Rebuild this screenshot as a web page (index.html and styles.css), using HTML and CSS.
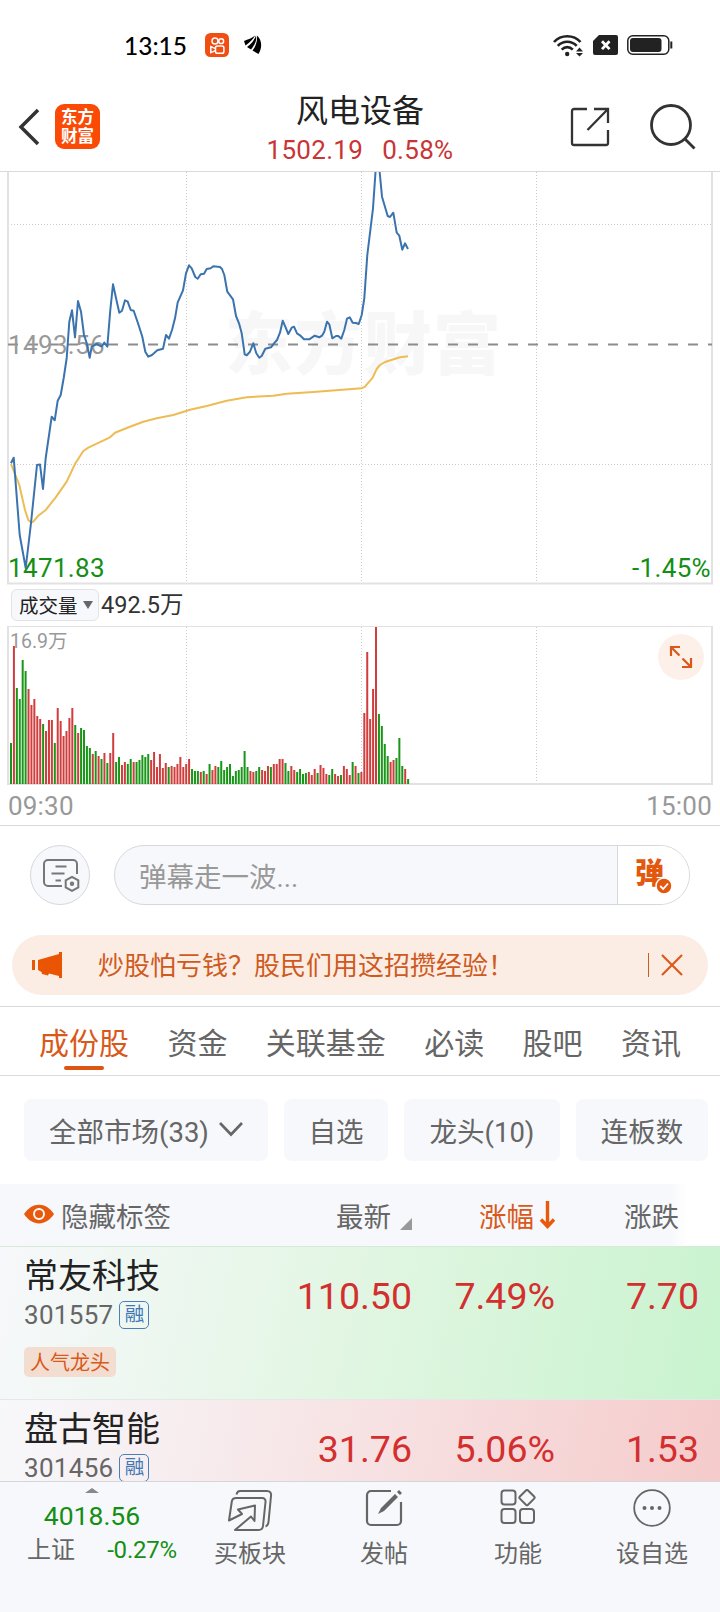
FILE: index.html
```html
<!DOCTYPE html>
<html lang="zh-CN">
<head>
    <meta charset="UTF-8">
    <meta name="viewport" content="width=device-width, initial-scale=1.0">
    <title>风电设备</title>
    <link rel="stylesheet" href="styles.css">
</head>
<body>

    <div class="status-bar">
        <div class="status-left">
            <span class="clock">13:15</span>
            <svg class="app-dot" width="24" height="24" viewBox="0 0 24 24" fill="none">
                <rect width="24" height="24" rx="5.5" fill="#f04e12"/>
                <g stroke="#fff" stroke-width="1.5">
                    <circle cx="10" cy="8" r="3"/>
                    <circle cx="16.2" cy="8.2" r="2.4"/>
                    <rect x="10.5" y="13" width="8.4" height="7.2" rx="1.8"/>
                    <path d="M10.5 15.6 5.8 13.6v6l4.7-2"/>
                </g>
            </svg>
            <svg width="18" height="20" viewBox="0 0 18 20">
                <path d="M0 6C4 4 8 3.500 11 .5 9.500 4 6 7 1.500 10.500zM3 12C7 9.500 10.500 5 12 .5 13 6 10.500 10 7 14.500zM8.500 15.500C12 11 13.500 6 13 .5 18 5 18.500 12 14.500 19z" fill="#000"/>
            </svg>
        </div>
        <div class="status-right">
            <svg width="31" height="23" viewBox="0 0 31 23" fill="none">
                <g stroke="#222" stroke-width="2.6">
                    <path d="M1 8C8 .3 20.5.3 27.5 8"/>
                    <path d="M4.8 11.8C10 6.300 18.500 6.300 23.700 11.800"/>
                    <path d="M8.700 15.700C12 12.300 16.500 12.300 19.800 15.700"/>
                </g>
                <circle cx="14.200" cy="20" r="2.200" fill="#222"/>
                <path d="M23 17.500 26.500 13.500 30 17.500zM23 19 26.500 22.500 30 19z" fill="#222"/>
            </svg>
            <svg width="25" height="20" viewBox="0 0 25 20">
                <path d="M6 0h17a2 2 0 0 1 2 2v16a2 2 0 0 1-2 2H2a2 2 0 0 1-2-2V6z" fill="#222"/>
                <path d="M9 6.300l7.500 7.800M16.500 6.300 9 14.100" stroke="#fff" stroke-width="2.800"/>
            </svg>
            <svg width="46" height="20" viewBox="0 0 46 20" fill="none">
                <rect x=".8" y=".8" width="41" height="18.400" rx="5" stroke="#222" stroke-width="1.500"/>
                <rect x="3" y="3" width="31.500" height="14" rx="3" fill="#222"/>
                <path d="M44.300 6.500v7" stroke="#222" stroke-width="2"/>
            </svg>
        </div>
    </div>

    <header class="header">
        <div class="header-left">
            <svg width="22" height="38" viewBox="0 0 22 38" fill="none">
                <path d="M20 2 3 19l17 17" stroke="#333" stroke-width="3.500"/>
            </svg>
            <div class="logo"><span>东方</span><span>财富</span></div>
        </div>
        <div class="header-title">
            <h1>风电设备</h1>
            <p><span>1502.19</span><span>0.58%</span></p>
        </div>
        <div class="header-right">
            <svg width="40" height="40" viewBox="0 0 40 40" fill="none" stroke="#333" stroke-width="2.300">
                <path d="M17 2H4a2 2 0 0 0-2 2v32a2 2 0 0 0 2 2h32a2 2 0 0 0 2-2V23M24 2h14v14M38 2 17.500 23"/>
            </svg>
            <svg width="46" height="46" viewBox="0 0 46 46" fill="none" stroke="#333" stroke-width="2.800">
                <circle cx="21" cy="21" r="19.500"/>
                <path d="M34.500 34.500 44.500 44.500"/>
            </svg>
        </div>
    </header>

    <section class="charts">
        <!-- 分时走势 -->
        <svg class="price-chart" width="720" height="414" viewBox="0 172 720 414">
            <text class="watermark" x="225" y="369" textLength="276">东方财富</text>
            <path class="grid" d="M8 224.500H712M8 464.500H712M186.500 172V583M361.500 172V583M536.500 172V583"/>
            <path class="frame" d="M8 172V583.500H712V172"/>
            <path class="base-line" d="M8 344.500H712"/>
            <text class="axis gray" x="8" y="354">1493.56</text>
            <text class="axis green" x="8" y="577">1471.83</text>
            <text class="axis green" x="711" y="577" text-anchor="end">-1.45%</text>
            <polyline class="line-avg" points="11,464 19.300,485 25,510 28.300,520 31,522.300 33.300,521.700 38.300,515.700 46,509.700 51.700,502.300 55,498.300 66.700,481.700 75,464 83.300,451 88.300,447.700 110,437.300 115,432.700 130,426.700 143.300,421.700 156.700,418.300 173.300,415 190,409.700 206.700,406 226.700,400.700 246.700,397.300 273.300,395.700 286.700,393.700 313.300,392 361.700,388.300 365,386.700 372.700,377.700 376.700,369 380,365 385,362 400,357.300 408,356.300"/>
            <polyline class="line-price" points="11,463.300 13.700,457.700 19.700,535 25.700,568 31,523 37,465 40,464.500 43,489 45.700,458 51.700,416.700 54.700,420.300 57.700,400.700 60.700,395 63.700,378 66.700,358 69.300,321.700 72,310.300 75,337.300 78,301 81,311.700 84,335 86.700,343 89.700,357.700 91.700,346.700 96.700,344 101.700,346.500 104.300,342.500 107.300,346.700 110.300,310 113,284.300 116,298 119.300,312.700 122,310.700 125,300.300 127.700,301.700 130.700,310 133.700,310.700 138,323.300 142.300,336.700 145.300,351.700 148.300,356.700 152,355 157.300,350.300 163,348.700 166,335 169,338.700 172,330 175,318.300 177.700,302.300 183,290.300 186,273.300 189,265.300 191.700,268.300 195.300,277 197.700,278.700 200.700,274.300 204,273.700 206.700,269 210.700,268.300 213.300,266.300 220,267 222,269 224.300,275 227.300,291.700 233,299.300 236,316 239,323.300 241.700,333.300 244.700,354.300 246.700,355.300 250,351.700 253.300,343.300 256.300,353.300 259.300,357.700 261.700,356 265.300,348.700 271,347.300 274,343.300 277,340 280,332.700 282.700,320.700 285.300,326.700 288.300,334 291.700,327.700 294,326.700 297,333.300 300,335.300 304,339.300 309.300,339.300 314.700,335.700 319.300,337.300 322,335.700 324.300,331.700 327,321.700 329.300,324.300 332.300,338.300 336,336 338.300,336 341.300,338.700 344.300,330 347,318.700 349.700,317.300 352.700,322.700 356,323 358.700,324 361.700,315 364.300,298.300 367.300,255 373,208.300 376,165 379,165 382,196.700 387.700,216 390,217 393.300,212.700 396.700,232.700 399.300,235.700 402.300,249.700 405,243.300 408,249"/>
        </svg>

        <div class="volume-head">
            <div class="volume-select">成交量<i class="arrow-down"></i></div>
            <span>492.5万</span>
        </div>

        <!-- 成交量 -->
        <div class="volume-box">
            <svg width="720" height="160" viewBox="0 626 720 160">
                <path class="grid" d="M186.500 627V783M361.500 627V783M536.500 627V783"/>
                <path class="frame" d="M8 626V784H712V626"/>
                <path class="frame-top" d="M8 626.500H712"/>
                <text class="vol-max" x="10" y="648">16.9万</text>
                <g id="volumeBars"></g>
            </svg>
            <div class="expand">
                <svg width="24" height="24" viewBox="0 0 24 24" fill="none" stroke="#d9581a" stroke-width="2.200">
                    <path d="M2 11V2h9M2 2l8.500 8.500M22 13v9h-9M22 22l-8.500-8.500"/>
                </svg>
            </div>
        </div>

        <div class="time-axis"><span>09:30</span><span>15:00</span></div>
    </section>

    <section class="danmu">
        <div class="danmu-setting">
            <svg width="38" height="34" viewBox="0 0 38 34" fill="none" stroke="#777" stroke-width="2">
                <path d="M20 28H6a4 4 0 0 1-4-4V6a4 4 0 0 1 4-4h25a4 4 0 0 1 4 4v10M13.500 8.500H24.500M9.500 15.500H22.500M13.500 22.500H19"/>
                <path d="M30 18.800 36.300 22.300v7L30 32.800 23.700 29.300v-7z"/>
                <circle cx="30" cy="25.800" r="1.200"/>
            </svg>
        </div>
        <div class="danmu-input">
            <span class="placeholder">弹幕走一波...</span>
            <div class="danmu-switch">
                <span>弹</span>
                <svg class="danmu-check" width="18" height="18" viewBox="0 0 18 18" fill="none">
                    <circle cx="9" cy="9" r="8" fill="#e2580f" stroke="#fff" stroke-width="1.500"/>
                    <path d="M5.200 9l3 3 4.800-5.500" stroke="#fff" stroke-width="1.800"/>
                </svg>
            </div>
        </div>
    </section>

    <div class="notice">
        <svg width="31" height="28" viewBox="0 0 31 28" fill="#ea5504">
            <path d="M0 9h3v10H0zM6 9 27 3V1h3v26h-3v-2l-10-2.500-1 2-6-1.500-.5-2L6 19z"/>
        </svg>
        <p>炒股怕亏钱？股民们用这招攒经验！</p>
        <i class="notice-line"></i>
        <svg width="22" height="22" viewBox="0 0 22 22" stroke="#dc5a1c" stroke-width="2.200">
            <path d="M1 1 21 21M21 1 1 21"/>
        </svg>
    </div>

    <nav class="tabs">
        <span class="active">成份股</span>
        <span>资金</span>
        <span>关联基金</span>
        <span>必读</span>
        <span>股吧</span>
        <span>资讯</span>
    </nav>

    <div class="chips">
        <div class="chip chip-market">全部市场(33)
            <svg width="24" height="15" viewBox="0 0 24 15" fill="none" stroke="#666" stroke-width="2.600">
                <path d="M1 1 12 12.500 23 1"/>
            </svg>
        </div>
        <div class="chip chip-self">自选</div>
        <div class="chip chip-lead">龙头(10)</div>
        <div class="chip chip-board">连板数</div>
    </div>

    <div class="stock-grid stock-head">
        <div class="toggle-tags">
            <svg width="30" height="20" viewBox="0 0 30 20">
                <path d="M0 10C8-2.500 22-2.500 30 10 22 22.500 8 22.500 0 10z" fill="#e8590c"/>
                <circle cx="15" cy="10" r="5" fill="none" stroke="#f7f8fb" stroke-width="2"/>
            </svg>
            隐藏标签
        </div>
        <div class="col">最新<i class="corner"></i></div>
        <div class="col sorted">涨幅
            <svg width="15" height="28" viewBox="0 0 15 28" fill="none" stroke="#e8590c" stroke-width="3.400">
                <path d="M7.500 0v25M1 18.500l6.500 7 6.500-7"/>
            </svg>
        </div>
        <div class="col col-last">涨跌</div>
    </div>

    <main class="stock-list">
        <div class="stock-grid stock-row green-row">
            <div class="stock-info">
                <h2>常友科技</h2>
                <p>301557<em>融</em></p>
                <b>人气龙头</b>
            </div>
            <div class="num">110.50</div>
            <div class="num">7.49%</div>
            <div class="num">7.70</div>
        </div>
        <div class="stock-grid stock-row red-row">
            <div class="stock-info">
                <h2>盘古智能</h2>
                <p>301456<em>融</em></p>
            </div>
            <div class="num">31.76</div>
            <div class="num">5.06%</div>
            <div class="num">1.53</div>
        </div>
    </main>

    <footer class="bottom-bar">
        <div class="index-box">
            <i class="arrow-up"></i>
            <strong>4018.56</strong>
            <p><span>上证</span><em>-0.27%</em></p>
        </div>
        <div class="action action-buy">
            <svg width="46" height="42" viewBox="0 0 46 42" fill="none" stroke="#666" stroke-width="2" stroke-linejoin="round">
                <path d="M9.500 5.500C10 3 11 2 13 2h27c3 0 4.500 2 4 5l-2.500 26c-.3 3-1 4-3 4.500"/>
                <path d="M2 31.500 4.800 12.500C5.200 10 6.500 9 9 9H35c2.500 0 3.800 1.500 3.500 4L36 37c-.3 2.700-1.500 4-4.500 4H8L24 27.500l3.500 4.500.5-15.500-17 4L15 25z"/>
            </svg>
            <span>买板块</span>
        </div>
        <div class="action action-post">
            <svg width="38" height="38" viewBox="0 0 38 38" fill="none" stroke="#666" stroke-width="2.200">
                <path d="M26 2H6a4 4 0 0 0-4 4v26a4 4 0 0 0 4 4h26a4 4 0 0 0 4-4V13"/>
                <path d="M13 25l3-6L30 5l3 3-14 14zM32 3l2-2 3 3-2 2z" fill="#666" stroke="none"/>
            </svg>
            <span>发帖</span>
        </div>
        <div class="action action-func">
            <svg width="36" height="36" viewBox="0 0 36 36" fill="none" stroke="#666" stroke-width="2">
                <rect x="1.500" y="1.500" width="14" height="14" rx="3"/>
                <rect x="1.500" y="20" width="14" height="14" rx="3"/>
                <rect x="20" y="20" width="14" height="14" rx="3"/>
                <rect x="21.200" y="2.800" width="11.600" height="11.600" rx="1.500" transform="rotate(45 27 8.600)"/>
            </svg>
            <span>功能</span>
        </div>
        <div class="action action-add">
            <svg width="38" height="38" viewBox="0 0 38 38" fill="none">
                <circle cx="19" cy="19" r="17.800" stroke="#666" stroke-width="1.800"/>
                <g fill="#666"><circle cx="11.500" cy="19" r="2"/><circle cx="19" cy="19" r="2"/><circle cx="26.500" cy="19" r="2"/></g>
            </svg>
            <span>设自选</span>
        </div>
    </footer>

    <script>
        // r = 红, g = 绿, 数字为柱高
        const volumes = 'g41 r138 g96 g85 g124 g113 r95 r79 r85 r68 r65 g60 r53 r64 r64 g41 r76 r63 r48 r53 r66 r76 g59 r51 g56 g54 g38 g36 r30 g33 r28 g25 r31 g21 r31 r51 g22 g27 r19 r22 g20 g25 r22 g22 g24 g29 g27 g30 r24 r32 r17 r30 r16 r21 g17 r18 r17 r20 r27 r17 r20 r25 g15 g13 g13 r12 g13 r10 g20 r14 r18 g17 g23 g14 g17 g20 g8 g13 g14 g17 g33 g17 r13 r12 g13 g17 r14 r13 r18 g17 r20 r20 r25 r25 g21 g13 r18 r14 g12 g15 g10 g11 r12 r9 r15 g11 r19 r16 r10 g9 g15 r10 r8 g9 r18 r15 r9 g22 r18 g11 r12 r71 r132 r65 r95 r157 g70 g58 g40 g28 r22 r24 g26 g46 g18 r15 g5'.split(' ');
        const group = document.getElementById('volumeBars');
        volumes.forEach((item, i) => {
            const h = Number(item.slice(1));
            const bar = document.createElementNS('http://www.w3.org/2000/svg', 'rect');
            bar.setAttribute('x', (10 + i * 2.92).toFixed(2));
            bar.setAttribute('y', 784 - h);
            bar.setAttribute('width', 2);
            bar.setAttribute('height', h);
            bar.setAttribute('class', item[0] === 'r' ? 'bar-up' : 'bar-down');
            group.appendChild(bar);
        });
    </script>

</body>
</html>
```

FILE: styles.css
```css
* {
    margin: 0;
    padding: 0;
    box-sizing: border-box;
}

body {
    width: 720px;
    height: 1612px;
    overflow: hidden;
    display: flex;
    flex-direction: column;
    background: #fff;
    color: #666;
    font-family: Roboto, 'Noto Sans CJK SC', sans-serif;
}

body > * {
    flex-shrink: 0;
}

svg {
    display: block;
    flex-shrink: 0;
}

em, i {
    font-style: normal;
}

/* 状态栏 */
.status-bar {
    height: 84px;
    padding: 6px 47px 0 124px;
    display: flex;
    align-items: center;
    justify-content: space-between;
}

.status-left, .status-right {
    display: flex;
    align-items: center;
}

.clock {
    width: 63px;
    font-family: Lato, sans-serif;
    font-size: 24.5px;
    font-weight: 500;
    color: #000;
    white-space: nowrap;
}

.app-dot {
    margin: 0 15px 0 18px;
}

.status-right {
    gap: 9px;
}

/* 顶部标题 */
.header {
    height: 88px;
    padding: 0 24px 0 18px;
    display: grid;
    grid-template-columns: 248px 1fr 150px;
    border-bottom: 1px solid #d9d9d9;
}

.header-left {
    display: flex;
    align-items: center;
    gap: 15px;
    padding-bottom: 2px;
}

.logo {
    width: 45px;
    height: 45px;
    border-radius: 9px;
    background: #fa4a05;
    color: #fff;
    display: flex;
    flex-direction: column;
    align-items: center;
    justify-content: center;
    font-size: 16.5px;
    line-height: 19px;
    font-weight: 700;
}

.header-title {
    width: 188px;
    text-align: center;
}

.header-title h1 {
    font-size: 32px;
    line-height: 38px;
    margin-top: 8px;
    font-weight: 400;
    color: #222;
}

.header-title p {
    display: flex;
    justify-content: center;
    gap: 19px;
    font-size: 26px;
    line-height: 36px;
    letter-spacing: .3px;
    color: #c93535;
    padding-top: 2px;
}

.header-right {
    display: flex;
    justify-content: flex-end;
    align-items: center;
    gap: 40px;
    padding-bottom: 2px;
}

/* 图表 */
.charts {
    height: 654px;
    border-bottom: 1px solid #d9d9d9;
}

.watermark {
    font-size: 68px;
    font-weight: 900;
    fill: #f7f7f7;
}

.grid {
    fill: none;
    stroke: #ccc;
    stroke-dasharray: 1 2;
}

.frame {
    fill: none;
    stroke: #e2e2e2;
    stroke-width: 2;
}

.frame-top {
    stroke: #e2e2e2;
}

.base-line {
    stroke: #8c8c8c;
    stroke-width: 2;
    stroke-dasharray: 10 10;
}

.axis {
    font-size: 26px;
    letter-spacing: .35px;
}

.gray {
    fill: #999;
}

.green {
    fill: #148f14;
}

.line-avg, .line-price {
    fill: none;
    stroke-width: 2;
    stroke-linejoin: round;
}

.line-avg {
    stroke: #edbc55;
}

.line-price {
    stroke: #3b73ae;
}

.volume-head {
    height: 40px;
    padding: 3px 0 5px 11px;
    display: flex;
    align-items: center;
    gap: 2px;
    font-size: 23.5px;
    color: #333;
}

.volume-head > span {
    margin-top: -4px;
}

.volume-select {
    width: 88px;
    height: 32px;
    padding: 0 0 1px 7px;
    display: flex;
    align-items: center;
    gap: 5px;
    background: #f7f8fb;
    border: 1px solid #e2e3e6;
    border-radius: 6px;
    font-size: 19.5px;
    color: #222;
    white-space: nowrap;
}

.arrow-down {
    border: 5px solid transparent;
    border-top: 8px solid #666;
    border-bottom: 0;
}

.volume-box {
    position: relative;
    height: 160px;
}

.vol-max {
    font-size: 19.5px;
    fill: #999;
}

.bar-up {
    fill: #d13d3d;
}

.bar-down {
    fill: #189618;
}

.expand {
    position: absolute;
    right: 16px;
    top: 8px;
    width: 46px;
    height: 46px;
    border-radius: 50%;
    background: #fdf0e9;
    display: flex;
    align-items: center;
    justify-content: center;
}

.time-axis {
    padding: 0 8px;
    display: flex;
    justify-content: space-between;
    font-size: 26px;
    line-height: 40px;
    letter-spacing: .2px;
    color: #999;
}

/* 弹幕 */
.danmu {
    height: 109px;
    padding: 19px 30px 0;
    display: flex;
    gap: 24px;
}

.danmu-setting {
    width: 60px;
    height: 60px;
    padding: 0 0 0 2px;
    border: 1px solid #d6d8dc;
    border-radius: 50%;
    background: #f7f8fb;
    display: flex;
    align-items: center;
    justify-content: center;
}

.danmu-input {
    flex: 1;
    height: 60px;
    display: flex;
    align-items: center;
    justify-content: space-between;
    border: 1px solid #d6d8dc;
    border-radius: 30px;
    background: #f7f8fb;
    overflow: hidden;
}

.placeholder {
    padding-left: 24px;
    font-size: 27.5px;
    color: #999;
}

.danmu-switch {
    position: relative;
    width: 72px;
    height: 58px;
    padding-left: 17px;
    border-left: 1px solid #d6d8dc;
    background: #fff;
    font-size: 29px;
    line-height: 57px;
    font-weight: 900;
    color: #e2580f;
}

.danmu-check {
    position: absolute;
    left: 37px;
    top: 31px;
}

.notice {
    height: 60px;
    margin: 0 12px;
    padding: 0 25px 0 20px;
    display: flex;
    align-items: center;
    border-radius: 30px;
    background: #fcede4;
    color: #cf5a1e;
}

.notice p {
    flex: 1;
    margin-top: -3px;
    padding-left: 35px;
    font-size: 26px;
    white-space: nowrap;
}

.notice-line {
    width: 1px;
    height: 24px;
    margin-right: 12px;
    background: #cf5a1e;
}

/* 标签页 */
.tabs {
    height: 70px;
    margin-top: 11px;
    padding: 0 39px;
    display: flex;
    justify-content: space-between;
    border-top: 1px solid #d9d9d9;
    border-bottom: 1px solid #d9d9d9;
    font-size: 30px;
    line-height: 73px;
}

.tabs .active {
    position: relative;
    color: #d9591a;
}

.tabs .active::after {
    content: '';
    position: absolute;
    left: 25px;
    bottom: 5px;
    width: 40px;
    height: 4px;
    border-radius: 2px;
    background: #dc5511;
}

.chips {
    padding: 23px 12px 23px 24px;
    display: grid;
    grid-template-columns: 244px 104px 156px 132px;
    gap: 16px;
}

.chip {
    height: 62px;
    display: flex;
    align-items: center;
    justify-content: center;
    gap: 10px;
    border-radius: 8px;
    background: #f7f8fb;
    font-size: 27.5px;
    white-space: nowrap;
}

.chip svg {
    margin-top: -1px;
}

/* 列表 */
.stock-grid {
    display: grid;
    grid-template-columns: 252px 136px 143px 144px;
    padding-left: 24px;
}

.stock-head {
    height: 62px;
    align-items: center;
    background: linear-gradient(90deg, #f7f8fb 670px, #fff 688px);
    font-size: 27.5px;
}

.toggle-tags {
    display: flex;
    align-items: center;
    gap: 7px;
}

.toggle-tags svg {
    margin-top: -2px;
}

.col {
    display: flex;
    align-items: center;
    justify-content: flex-end;
    gap: 7px;
}

.corner {
    margin: 18px 0 0 2px;
    border-left: 12px solid transparent;
    border-bottom: 12px solid #999;
}

.sorted {
    gap: 6px;
    color: #d9591a;
}

.sorted svg {
    margin-top: -1px;
}

.col-last {
    padding-right: 20px;
}

.stock-list {
    height: 235px;
    overflow: hidden;
}

.stock-row {
    height: 153px;
    border-top: 1px solid #e4e8e8;
}

.green-row {
    border-top-color: #d5ead8;
    background: linear-gradient(102deg, #f7f8fb 0%, #e1f6e2 50%, #c9f3cf 100%);
}

.red-row {
    background: linear-gradient(102deg, #f7f8fb 0%, #f7e2e3 50%, #f5caca 100%);
}

.stock-info h2 {
    margin-top: 8px;
    font-size: 34px;
    line-height: 42px;
    font-weight: 400;
    color: #222;
}

.stock-info p {
    display: flex;
    align-items: center;
    gap: 6px;
    height: 30px;
    margin-top: 3px;
    font-size: 26px;
    letter-spacing: .3px;
}

.stock-info em {
    width: 30px;
    height: 28px;
    border: 1px solid #4a80b8;
    border-radius: 5px;
    font-size: 19.5px;
    line-height: 26px;
    text-align: center;
    letter-spacing: 0;
    color: #3f78b5;
}

.stock-info b {
    display: inline-block;
    height: 30px;
    margin-top: 17px;
    padding: 1px 6px 0;
    border-radius: 5px;
    background: #f2ddd0;
    font-size: 20px;
    line-height: 30px;
    font-weight: 400;
    color: #d9591a;
}

.num {
    padding-top: 26px;
    text-align: right;
    font-size: 37.5px;
    line-height: 46px;
    color: #d32f2f;
}

/* 底部栏 */
.bottom-bar {
    flex: 1;
    display: grid;
    grid-template-columns: 184px 134px 134px 134px 134px;
    border-top: 1px solid #d4d6da;
    background: #f7f8fb;
    font-size: 24px;
}

.index-box {
    display: flex;
    flex-direction: column;
    align-items: center;
    padding-top: 6px;
}

.arrow-up {
    border: 7px solid transparent;
    border-bottom: 5px solid #888;
    border-top: 0;
}

.index-box strong {
    margin-top: 5px;
    font-size: 26.5px;
    line-height: 35px;
    font-weight: 400;
    color: #148f14;
}

.index-box p {
    width: 150px;
    margin-left: 20px;
    display: flex;
    justify-content: space-between;
    line-height: 34px;
}

.index-box em {
    font-size: 24px;
    letter-spacing: -.2px;
    color: #148f14;
}

.action {
    display: flex;
    flex-direction: column;
    align-items: center;
    justify-content: space-between;
    height: 87px;
    padding: 7px 2px 0 0;
}

.action span {
    line-height: 30px;
}
```
